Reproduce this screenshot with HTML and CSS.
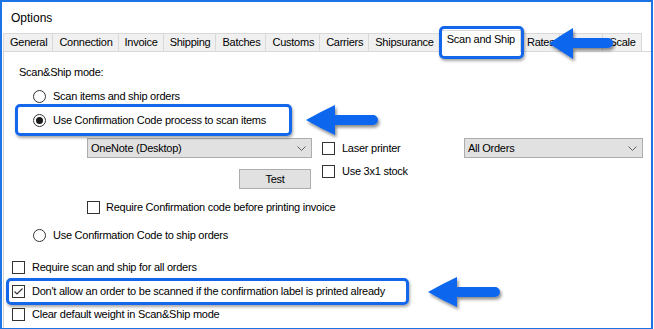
FILE: index.html
```html
<!DOCTYPE html>
<html>
<head>
<meta charset="utf-8">
<link rel="stylesheet" href="styles.css">
</head>
<body>
<div class="window">
  <div class="titlebar">Options</div>
  <div class="tabs">
    <div class="tab">General</div>
    <div class="tab">Connection</div>
    <div class="tab">Invoice</div>
    <div class="tab">Shipping</div>
    <div class="tab">Batches</div>
    <div class="tab">Customs</div>
    <div class="tab">Carriers</div>
    <div class="tab">Shipsurance</div>
    <div class="tab selected">Scan and Ship</div>
    <div class="tab">Rates</div>
    <div class="tab">Labels</div>
    <div class="tab">Scale</div>
  </div>
  <div class="panel">
    <div class="row heading">Scan&amp;Ship mode:</div>
    <div class="row radio-row first-radio"><span class="radio"></span><span>Scan items and ship orders</span></div>
    <div class="row radio-row"><span class="radio checked"></span><span>Use Confirmation Code process to scan items</span></div>
    <div class="middle">
      <div class="col-a">
        <div class="combo combo-printer"><span>OneNote (Desktop)</span><svg class="chev" width="9" height="5" viewBox="0 0 9 5"><polyline points="0.5,0.5 4.5,4.5 8.5,0.5" fill="none" stroke="#606060" stroke-width="1"/></svg></div>
        <div class="button">Test</div>
      </div>
      <div class="col-b">
        <div class="check-line"><span class="box"></span><span>Laser printer</span></div>
        <div class="check-line second"><span class="box"></span><span>Use 3x1 stock</span></div>
      </div>
      <div class="col-c">
        <div class="combo combo-orders"><span>All Orders</span><svg class="chev" width="9" height="5" viewBox="0 0 9 5"><polyline points="0.5,0.5 4.5,4.5 8.5,0.5" fill="none" stroke="#606060" stroke-width="1"/></svg></div>
      </div>
    </div>
    <div class="row sub-check"><span class="box"></span><span>Require Confirmation code before printing invoice</span></div>
    <div class="row radio-row third-radio"><span class="radio"></span><span>Use Confirmation Code to ship orders</span></div>
    <div class="row check-row r6"><span class="box"></span><span>Require scan and ship for all orders</span></div>
    <div class="row check-row r7"><span class="box checked"><svg width="11" height="11" viewBox="0 0 11 11"><polyline points="1.5,5.5 4,8 9.5,2.5" fill="none" stroke="#333" stroke-width="1.2"/></svg></span><span>Don't allow an order to be scanned if the confirmation label is printed already</span></div>
    <div class="row check-row r8"><span class="box"></span><span>Clear default weight in Scan&amp;Ship mode</span></div>
  </div>
</div>
<div class="hl hl-tab"></div>
<div class="hl hl-radio"></div>
<div class="hl hl-check"></div>
<svg class="arrows" width="654" height="329" viewBox="0 0 654 329">
  <defs>
    <filter id="sh" x="-20%" y="-30%" width="140%" height="170%">
      <feDropShadow dx="1.5" dy="2.5" stdDeviation="1.8" flood-color="#000" flood-opacity="0.45"/>
    </filter>
  </defs>
  <g fill="#0b66ee" filter="url(#sh)">
    <path d="M549,43.5 Q561,35 573,28 L573,38 L608,38 A5,5 0 0 1 608,48 L573,48 L573,59 Q561,51 549,43.5 Z"/>
    <path d="M306,120 Q320,112 335,105 L335,115 L373,115 A5,5 0 0 1 373,125 L335,125 L335,135 Q320,128 306,120 Z"/>
    <path d="M428,292 Q442,284 457,277 L457,287 L495,287 A5,5 0 0 1 495,297 L457,297 L457,307 Q442,300 428,292 Z"/>
  </g>
</svg>
</body>
</html>
```
FILE: styles.css
```css
html, body {
  margin: 0;
  padding: 0;
  background: #ffffff;
}
body {
  position: relative;
  width: 654px;
  height: 329px;
  overflow: hidden;
  font-family: "Liberation Sans", Arial, sans-serif;
  font-size: 11px;
  letter-spacing: -0.25px;
  color: #000;
}
.window {
  box-sizing: border-box;
  width: 653px;
  height: 329px;
  border: 2px solid #1c74e4;
  border-bottom-width: 1px;
  background: #fff;
  display: flex;
  flex-direction: column;
}
.titlebar {
  height: 31px;
  box-sizing: border-box;
  padding: 9px 0 0 9px;
  font-size: 12px;
  letter-spacing: 0;
  line-height: 14px;
}
.tabs {
  display: flex;
  margin-left: 1px;
  height: 18px;
  align-items: flex-end;
}
.tab {
  box-sizing: border-box;
  height: 18px;
  line-height: 17px;
  padding: 0 5px 0 6px;
  background: #f0f0f0;
  border: 1px solid #d9d9d9;
  border-left: none;
  border-bottom: none;
  white-space: nowrap;
}
.tab:first-child {
  border-left: 1px solid #d9d9d9;
}
.tab.selected {
  height: 22px;
  margin: 0 0 0 1px;
  background: #fff;
  border-left: 1px solid #d9d9d9;
  line-height: 17px;
  position: relative;
  top: 1px;
  padding: 0 5px 0 5px;
}
.panel {
  flex: 1;
  margin-left: 1px;
  border-top: 1px solid #d9d9d9;
  border-left: 1px solid #cfcfcf;
  padding-top: 13px;
  display: flex;
  flex-direction: column;
}
.row {
  display: flex;
  align-items: center;
  height: 20px;
  white-space: nowrap;
}
.heading {
  height: 14px;
  padding-left: 15px;
  line-height: 14px;
}
.radio-row {
  height: 24px;
  padding-left: 29px;
  gap: 7px;
}
.first-radio {
  margin-top: 5px;
}
.third-radio {
  height: 20px;
  margin-top: 8px;
}
.radio {
  box-sizing: border-box;
  width: 13px;
  height: 13px;
  border: 1px solid #333;
  border-radius: 50%;
  background: #fff;
  display: flex;
  align-items: center;
  justify-content: center;
  flex: none;
}
.radio.checked::after {
  content: "";
  width: 7px;
  height: 7px;
  border-radius: 50%;
  background: #1a1a1a;
}
.box {
  box-sizing: border-box;
  width: 13px;
  height: 13px;
  border: 1px solid #333;
  background: #fff;
  flex: none;
  display: flex;
  align-items: center;
  justify-content: center;
}
.middle {
  display: flex;
  margin-top: 6px;
  height: 51px;
  padding-left: 83px;
}
.col-a {
  width: 225px;
  display: flex;
  flex-direction: column;
  align-items: flex-end;
}
.combo {
  box-sizing: border-box;
  height: 20px;
  background: #e1e1e1;
  border: 1px solid #adadad;
  display: flex;
  align-items: center;
  justify-content: space-between;
  padding: 0 5px 0 3px;
  white-space: nowrap;
}
.combo-printer {
  width: 225px;
}
.combo-orders {
  width: 179px;
}
.chev {
  display: block;
}
.button {
  box-sizing: border-box;
  width: 72px;
  height: 20px;
  margin-top: 11px;
  margin-right: 1px;
  background: #e1e1e1;
  border: 1px solid #adadad;
  display: flex;
  align-items: center;
  justify-content: center;
}
.col-b {
  width: 142px;
  margin-left: 10px;
  display: flex;
  flex-direction: column;
}
.check-line {
  display: flex;
  align-items: center;
  gap: 7px;
  height: 20px;
  white-space: nowrap;
}
.check-line.second {
  margin-top: 3px;
}
.col-c {
  display: flex;
  flex-direction: column;
}
.sub-check {
  margin-top: 8px;
  padding-left: 83px;
  gap: 6px;
}
.check-row {
  padding-left: 8px;
  gap: 7px;
}
.r6 {
  margin-top: 12px;
}
.r7 {
  margin-top: 4px;
}
.r8 {
  margin-top: 3px;
}
.hl {
  position: absolute;
  box-sizing: border-box;
  border: 3px solid #1467ea;
  border-radius: 5px;
  box-shadow: 1px 2px 3px rgba(0, 0, 0, 0.35);
}
.hl-tab {
  left: 439px;
  top: 26px;
  width: 85px;
  height: 33px;
}
.hl-radio {
  left: 15px;
  top: 104px;
  width: 277px;
  height: 32px;
}
.hl-check {
  left: 6px;
  top: 278px;
  width: 403px;
  height: 27px;
}
.arrows {
  position: absolute;
  left: 0;
  top: 0;
  pointer-events: none;
}
```
